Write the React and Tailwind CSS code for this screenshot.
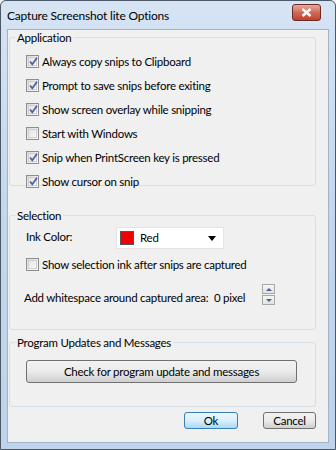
import React, { useState } from 'react';

const font = { fontFamily: 'Lato, "Open Sans", "Liberation Sans", sans-serif' };

const CheckBox = ({ checked }) => (
  <span className="relative w-[13px] h-[13px] border border-[#8e8f8f] bg-gradient-to-br from-[#dcdcdc] to-[#fbfbfb] flex items-center justify-center shrink-0">
    <span className="w-[9px] h-[9px] border border-[#d0d0d0] bg-gradient-to-br from-[#e4e4e4] to-[#f8f8f8]" />
    {checked && (
      <svg className="absolute left-[1px] top-[0px]" width="11" height="11" viewBox="0 0 11 11">
        <path d="M2 5.5 L4.3 8.3 L9 1.8" fill="none" stroke="#4c61a0" strokeWidth="1.8" />
      </svg>
    )}
  </span>
);

const CheckRow = ({ label, checked, onToggle }) => (
  <div className="flex items-center gap-[3px] h-[13px] cursor-default" onClick={onToggle}>
    <CheckBox checked={checked} />
    <span className="text-[11.5px] tracking-[-0.25px] leading-none text-black whitespace-nowrap">{label}</span>
  </div>
);

const GroupBox = ({ title, className, children }) => (
  <fieldset className={`border border-[#d5dfe5] rounded-[3px] mx-0 px-0 pt-0 ${className}`}>
    <legend className="ml-[5px] px-[2px] text-[11.5px] tracking-[-0.25px] leading-[15px] text-black">{title}</legend>
    {children}
  </fieldset>
);

const WinButton = ({ children, className, primary }) => (
  <button
    className={`rounded-[3px] border text-[11.5px] tracking-[-0.25px] text-black leading-none ${
      primary
        ? 'border-[#3c7fb1] bg-gradient-to-b from-[#eaf6fd] via-[#d9f0fc] to-[#a7d9f5]'
        : 'border-[#707070] bg-gradient-to-b from-[#f2f2f2] via-[#ebebeb] to-[#cfcfcf]'
    } ${className}`}
  >
    {children}
  </button>
);

export default function App() {
  const [opts, setOpts] = useState({
    clipboard: true,
    prompt: true,
    overlay: true,
    windows: false,
    printscreen: true,
    cursor: true,
    ink: false,
  });
  const toggle = (k) => setOpts((p) => ({ ...p, [k]: !p[k] }));

  const appRows = [
    ['clipboard', 'Always copy snips to Clipboard'],
    ['prompt', 'Prompt to save snips before exiting'],
    ['overlay', 'Show screen overlay while snipping'],
    ['windows', 'Start with Windows'],
    ['printscreen', 'Snip when PrintScreen key is pressed'],
    ['cursor', 'Show cursor on snip'],
  ];

  return (
    <div style={font} className="w-[336px] h-[450px] bg-[#f0f0f0]">
      <div className="w-[336px] h-[450px] border border-[#4a5868] rounded-t-[6px] bg-gradient-to-b from-[#d6e4f4] via-[#c3d6ec] to-[#bfd3ea] flex flex-col">
        {/* title bar */}
        <div className="h-[28px] flex items-start justify-between pl-[6px] pr-[14px]">
          <span className="text-[12px] tracking-[-0.2px] mt-[6px] text-black">Capture Screenshot lite Options</span>
          <div className="mt-[3px] w-[29px] h-[17px] rounded-[3px] border border-[#6b2a24] bg-gradient-to-b from-[#e7a99b] via-[#cf6a5a] to-[#c0402e] flex items-center justify-center">
            <svg width="11" height="9" viewBox="0 0 11 9">
              <path d="M1.5 1 L9.5 8 M9.5 1 L1.5 8" stroke="#fff" strokeWidth="2.4" />
            </svg>
          </div>
        </div>

        {/* client area */}
        <div className="mx-[6px] h-[414px] border border-[#9fb3c9] bg-[#f0f0f0] flex flex-col pl-[1px] pr-[12px]">
          <GroupBox title="Application" className="h-[156px] mt-[0px]">
            <div className="flex flex-col gap-[11px] pl-[16px] pt-[10px]">
              {appRows.map(([k, label]) => (
                <CheckRow key={k} label={label} checked={opts[k]} onToggle={() => toggle(k)} />
              ))}
            </div>
          </GroupBox>

          <GroupBox title="Selection" className="h-[122px] mt-[22px]">
            <div className="flex flex-col pl-[16px]">
              <div className="flex items-center h-[22px] mt-[4px]">
                <span className="text-[11.5px] tracking-[-0.25px] w-[90px] -mt-[3px]">Ink Color:</span>
                <div className="w-[108px] h-[22px] bg-white border border-[#e3e3e3] flex items-center pl-[3px] pr-[7px]">
                  <span className="w-[14px] h-[14px] bg-[#f00000] border border-[#555]" />
                  <span className="text-[11.5px] tracking-[-0.25px] ml-[6px] flex-1">Red</span>
                  <svg width="8" height="5" viewBox="0 0 8 5">
                    <path d="M0 0 H8 L4 5 Z" fill="#000" />
                  </svg>
                </div>
              </div>
              <div className="mt-[9px]">
                <CheckRow label="Show selection ink after snips are captured" checked={opts.ink} onToggle={() => toggle('ink')} />
              </div>
              <div className="flex items-start mt-[13px] -ml-[2px]">
                <span className="text-[11.5px] tracking-[-0.25px] w-[190px] mt-[5px] whitespace-nowrap">Add whitespace around captured area:</span>
                <span className="text-[11.5px] tracking-[-0.25px] w-[48px] mt-[5px] whitespace-nowrap">0 pixel</span>
                <div className="flex flex-col gap-[1px]">
                  {[0, 1].map((i) => (
                    <div key={i} className="w-[13px] h-[10px] border border-[#a8a8a8] bg-gradient-to-b from-[#f6f6f6] to-[#e2e2e2] flex items-center justify-center">
                      <svg width="6" height="3" viewBox="0 0 6 3">
                        <path d={i === 0 ? 'M0 3 H6 L3 0 Z' : 'M0 0 H6 L3 3 Z'} fill="#4d6185" />
                      </svg>
                    </div>
                  ))}
                </div>
              </div>
            </div>
          </GroupBox>

          <GroupBox title="Program Updates and Messages" className="h-[72px] mt-[5px]">
            <div className="pl-[16px] pt-[8px]">
              <WinButton className="w-[271px] h-[23px]">Check for program update and messages</WinButton>
            </div>
          </GroupBox>

          <div className="flex justify-end gap-[25px] mt-[5px] pr-[0px]">
            <WinButton primary className="w-[54px] h-[17px]">Ok</WinButton>
            <WinButton className="w-[53px] h-[17px]">Cancel</WinButton>
          </div>
        </div>
      </div>
    </div>
  );
}
